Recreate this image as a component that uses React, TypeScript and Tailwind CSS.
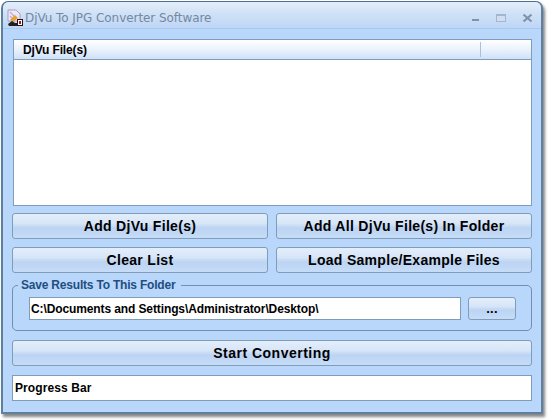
import React from "react";

const btn =
  "flex items-center justify-center rounded-[3px] border border-[#7f9db9] bg-[linear-gradient(180deg,#e4eefb_0%,#d6e5f7_40%,#bcd4f3_58%,#c6dcf7_100%)] text-[#000] font-bold [font-family:'Liberation_Sans',sans-serif] tracking-[0.3px]";

function Btn({ children, className }: { children: React.ReactNode; className: string }) {
  return <div className={`${btn} ${className}`}>{children}</div>;
}

export default function App() {
  return (
    <div className="w-[550px] h-[420px] bg-white pt-px pl-px [font-family:'Liberation_Sans',sans-serif]">
      <div className="w-[542px] h-[413px] flex flex-col rounded-t-[7px] border-2 border-t border-[#5f7f9f] border-t-[#4f6f8f] bg-[#b9d6fb] shadow-[2px_3px_3px_rgba(70,70,70,0.65)]">
        <div className="h-[27px] shrink-0 flex items-center rounded-t-[6px] bg-[linear-gradient(180deg,#e4eefa_0%,#d0e1f6_45%,#bdd6f6_100%)] border-b border-[#a9c8ee] pl-[3px] pr-[8px] pt-[5px]">
          <svg width="18" height="18" viewBox="0 0 18 18" className="shrink-0">
            <path d="M2 1h8l4 4v7H2z" fill="#ece8f6" stroke="#9a90bc" strokeWidth="0.8" />
            <path d="M4 3l6 6M4 7l3 3" stroke="#bcaad8" strokeWidth="1.2" />
            <path d="M9 6l3 3-5 4-3-2z" fill="#e8a030" />
            <path d="M2 15l4-3 3 2h3v3H3z" fill="#202020" />
            <rect x="11.5" y="10.5" width="5" height="6" fill="#fff" stroke="#301010" />
            <rect x="13" y="12" width="2" height="3" fill="#a02020" />
          </svg>
          <span className="ml-[1px] text-[12px] text-[#74889f] tracking-[-0.06px] [font-family:'DejaVu_Sans',sans-serif] font-normal whitespace-nowrap">
            DjVu To JPG Converter Software
          </span>
          <div className="ml-auto flex items-center gap-[16px]">
            <svg width="9" height="10" viewBox="0 0 9 10"><rect x="1" y="6" width="7" height="2" fill="#7f93ab" /></svg>
            <svg width="10" height="10" viewBox="0 0 10 10">
              <rect x="0.5" y="1.5" width="9" height="7" fill="#cfdef2" stroke="#a3b6cd" />
              <rect x="0" y="1" width="10" height="2" fill="#a3b6cd" />
            </svg>
            <svg width="11" height="10" viewBox="0 0 11 10">
              <path d="M1.5 1.5l8 7M9.5 1.5l-8 7" stroke="#7f93ab" strokeWidth="2.2" />
            </svg>
          </div>
        </div>
        <div className="flex-1 flex flex-col pt-[10px] pl-[9px] pr-[9px]">
          <div className="ml-[1px] mr-0 w-[519px] h-[167px] shrink-0 border border-[#7f9db9] bg-white flex flex-col">
            <div className="h-[20px] shrink-0 flex items-center border-b border-[#7f9db9] bg-[linear-gradient(180deg,#ffffff_0%,#eaf2fc_50%,#cfe1f7_100%)]">
              <div className="w-[467px] h-[15px] flex items-center border-r border-[#a9c0da] pl-[9px] text-[12px] font-bold text-black tracking-[-0.15px]">
                DjVu File(s)
              </div>
            </div>
          </div>
          <div className="mt-[7px] grid grid-cols-[256px_256px] gap-x-[8px] gap-y-[8px]">
            <Btn className="h-[26px] text-[14px]">Add DjVu File(s)</Btn>
            <Btn className="h-[26px] text-[14px]">Add All DjVu File(s) In Folder</Btn>
            <Btn className="h-[26px] text-[14px]">Clear List</Btn>
            <Btn className="h-[26px] text-[14px]">Load Sample/Example Files</Btn>
          </div>
          <div className="relative mt-[12px] w-[520px] h-[46px] shrink-0 rounded-[5px] border border-[#6f8fb3] flex items-center pl-[16px] pt-[1px]">
            <span className="absolute left-[5px] top-[-8px] pl-[3px] pr-[6px] bg-[#b9d6fb] text-[12px] leading-[14px] font-bold text-[#1f4f80] tracking-[-0.2px]">
              Save Results To This Folder
            </span>
            <div className="w-[432px] h-[23px] border border-[#7f9db9] bg-white flex items-center pl-[1px] text-[12px] font-bold text-black tracking-[-0.11px]">
              C:\Documents and Settings\Administrator\Desktop\
            </div>
            <Btn className="ml-[7px] w-[48px] h-[23px] text-[13px]">...</Btn>
          </div>
          <Btn className="mt-[9px] h-[26px] text-[14px] w-[520px] tracking-[0.5px]">Start Converting</Btn>
          <div className="mt-[9px] h-[26px] w-[520px] border border-[#7f9db9] bg-white flex items-center pl-[2px] text-[12px] font-bold text-black tracking-[0.1px]">
            Progress Bar
          </div>
        </div>
      </div>
    </div>
  );
}
